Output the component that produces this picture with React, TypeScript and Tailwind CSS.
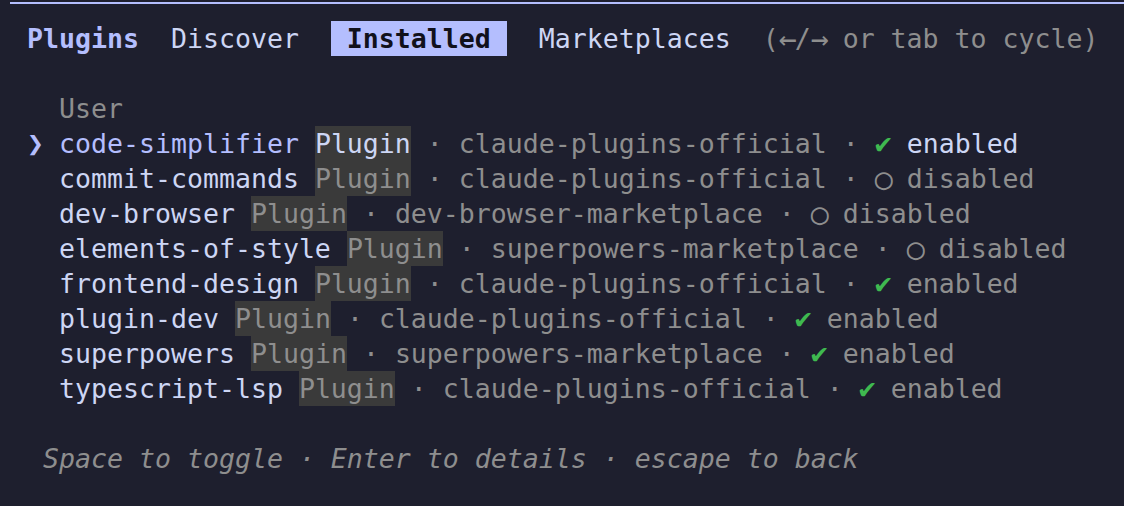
import React from "react";

type Plugin = { name: string; market: string; enabled: boolean };

const plugins: Plugin[] = [
  { name: "code-simplifier", market: "claude-plugins-official", enabled: true },
  { name: "commit-commands", market: "claude-plugins-official", enabled: false },
  { name: "dev-browser", market: "dev-browser-marketplace", enabled: false },
  { name: "elements-of-style", market: "superpowers-marketplace", enabled: false },
  { name: "frontend-design", market: "claude-plugins-official", enabled: true },
  { name: "plugin-dev", market: "claude-plugins-official", enabled: true },
  { name: "superpowers", market: "superpowers-marketplace", enabled: true },
  { name: "typescript-lsp", market: "claude-plugins-official", enabled: true },
];

// one terminal cell, for glyphs that may fall back to another font
function Cell({ children, className = "" }: { children?: React.ReactNode; className?: string }) {
  return <span className={`inline-block w-[16px] text-center ${className}`}>{children}</span>;
}

function Row({ plugin, selected }: { plugin: Plugin; selected: boolean }) {
  return (
    <div className="flex h-[35px] items-center whitespace-pre">
      <Cell />
      {selected ? <Cell className="font-bold text-[#b4befe] text-[28px]">❯</Cell> : <Cell />}
      <Cell />
      <span className={selected ? "text-[#b4befe]" : "text-[#cdd6f4]"}>{plugin.name}</span>
      <span> </span>
      <span className={`bg-[#3a3a3a] ${selected ? "text-[#cdd6f4]" : "text-[#8e8e8e]"}`}>Plugin</span>
      <span className="text-[#8e8e8e]"> </span>
      <Cell className="text-[#8e8e8e]">·</Cell>
      <span className="text-[#8e8e8e]"> {plugin.market} </span>
      <Cell className="text-[#8e8e8e]">·</Cell>
      <span> </span>
      {plugin.enabled ? (
        <Cell className="text-[#3fb950] text-[28px]">✔</Cell>
      ) : (
        <Cell className="text-[#8e8e8e] text-[30px]">○</Cell>
      )}
      <span className={selected ? "text-[#cdd6f4]" : "text-[#8e8e8e]"}> {plugin.enabled ? "enabled" : "disabled"}</span>
    </div>
  );
}

export default function App() {
  return (
    <div className="relative h-[506px] w-full overflow-hidden bg-[#1e1f2e] font-['DejaVu_Sans_Mono',monospace] text-[26.57px] leading-[35px] text-[#cdd6f4]">
      <div className="absolute left-[10px] right-0 top-[2px] h-[2px] bg-[#b4befe]" />
      <div className="pl-[11px] pt-[21px]">
        <div className="flex h-[35px] items-center whitespace-pre">
          <Cell />
          <span className="font-bold text-[#b4befe]">Plugins</span>
          <span>  Discover  </span>
          <span className="bg-[#b4befe] font-bold text-[#11111b]"> Installed </span>
          <span>  Marketplaces  </span>
          <span className="text-[#8e8e8e]">(</span>
          <Cell className="text-[#8e8e8e] text-[30px]">←</Cell>
          <span className="text-[#8e8e8e]">/</span>
          <Cell className="text-[#8e8e8e] text-[30px]">→</Cell>
          <span className="text-[#8e8e8e]"> or tab to cycle)</span>
        </div>
        <div className="h-[35px]" />
        <div className="flex h-[35px] items-center whitespace-pre text-[#8e8e8e]">
          <Cell />
          <Cell />
          <Cell />
          <span>User</span>
        </div>
        {plugins.map((p, i) => (
          <Row key={p.name} plugin={p} selected={i === 0} />
        ))}
        <div className="h-[35px]" />
        <div className="flex h-[35px] items-center whitespace-pre italic text-[#8e8e8e]">
          <Cell />
          <Cell />
          <span>Space to toggle </span>
          <Cell>·</Cell>
          <span> Enter to details </span>
          <Cell>·</Cell>
          <span> escape to back</span>
        </div>
      </div>
    </div>
  );
}
